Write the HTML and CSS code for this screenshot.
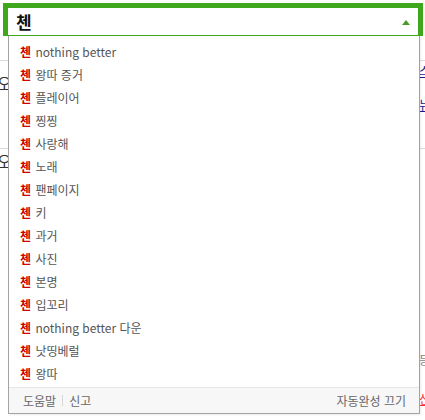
FILE: index.html
```html
<!DOCTYPE html>
<html lang="ko">
<head>
<meta charset="utf-8">
<link rel="stylesheet" href="styles.css">
</head>
<body>
<div class="page">
  <div class="search">
    <span class="query">첸</span>
    <span class="arrow"></span>
  </div>
  <div class="content">
    <div class="row row-a"></div>
    <div class="row row-b">
      <span class="left-frag">오</span>
      <div class="right-frag">
        <a class="link">스포츠</a>
        <a class="link">뉴스</a>
      </div>
    </div>
    <div class="row row-c">
      <span class="left-frag">오</span>
      <div class="right-frag bottom">
        <span class="gray-frag">등록</span>
        <a class="red-frag">신고</a>
      </div>
    </div>
  </div>

  <div class="dropdown">
    <ul class="list">
      <li class="item"><b class="hl">첸</b> nothing better</li>
      <li class="item"><b class="hl">첸</b> 왕따 증거</li>
      <li class="item"><b class="hl">첸</b> 플레이어</li>
      <li class="item"><b class="hl">첸</b> 찡찡</li>
      <li class="item"><b class="hl">첸</b> 사랑해</li>
      <li class="item"><b class="hl">첸</b> 노래</li>
      <li class="item"><b class="hl">첸</b> 팬페이지</li>
      <li class="item"><b class="hl">첸</b> 키</li>
      <li class="item"><b class="hl">첸</b> 과거</li>
      <li class="item"><b class="hl">첸</b> 사진</li>
      <li class="item"><b class="hl">첸</b> 본명</li>
      <li class="item"><b class="hl">첸</b> 입꼬리</li>
      <li class="item"><b class="hl">첸</b> nothing better 다운</li>
      <li class="item"><b class="hl">첸</b> 낫띵베럴</li>
      <li class="item"><b class="hl">첸</b> 왕따</li>
    </ul>
    <div class="footer">
      <div class="footer-left">
        <span class="f-link">도움말</span>
        <span class="sep"></span>
        <span class="f-link">신고</span>
      </div>
      <span class="f-link">자동완성 끄기</span>
    </div>
  </div>
</div>
</body>
</html>
```
FILE: styles.css
```css
html, body {
  margin: 0;
  padding: 0;
  background: #ffffff;
}
body {
  font-family: "Noto Sans CJK KR", "Noto Sans", sans-serif;
  width: 425px;
  height: 420px;
  overflow: hidden;
}
.page {
  position: relative;
  width: 425px;
  height: 420px;
  overflow: hidden;
}
.search {
  margin: 3px 2px 0 3px;
  height: 27px;
  border: 5px solid #3ea71c;
  border-bottom: 1px solid #3ea71c;
  background: #fff;
  display: flex;
  align-items: center;
  justify-content: space-between;
  padding: 0 8px 0 8px;
}
.query {
  font-size: 17px;
  font-weight: bold;
  color: #111;
  line-height: 27px;
}
.arrow {
  width: 0;
  height: 0;
  border-left: 4px solid transparent;
  border-right: 4px solid transparent;
  border-bottom: 5px solid #4c9a2a;
  margin-top: 1px;
}
.content {
  display: flex;
  flex-direction: column;
  font-size: 13px;
}
.row {
  display: flex;
  border-bottom: 1px solid #dcdcdc;
}
.row-a {
  height: 24px;
}
.row-b {
  height: 88px;
  padding-top: 2px;
  box-sizing: border-box;
}
.row-c {
  height: 268px;
  padding-top: 2px;
  box-sizing: border-box;
  border-bottom: none;
}
.left-frag {
  margin-left: -3px;
  margin-top: 10px;
  color: #333;
  font-size: 16px;
  line-height: 20px;
  align-self: flex-start;
}
.row-c .left-frag {
  margin-top: 0;
}
.right-frag {
  margin-left: auto;
  width: 6px;
  display: flex;
  flex-direction: column;
  gap: 18px;
  overflow: hidden;
  white-space: nowrap;
}
.right-frag.bottom {
  gap: 22px;
  padding-top: 200px;
}
.link {
  color: #1a1a8c;
  text-decoration: underline;
  font-size: 12px;
  line-height: 16px;
}
.gray-frag {
  color: #888;
  font-size: 12px;
}
.red-frag {
  color: #e33;
  text-decoration: underline;
  font-size: 12px;
}
.dropdown {
  position: absolute;
  left: 8px;
  top: 36px;
  width: 410px;
  border: 1px solid #a3a3a3;
  border-top: none;
  background: #fff;
  box-shadow: 1px 1px 2px rgba(0, 0, 0, 0.08);
}
.list {
  list-style: none;
  margin: 0;
  padding: 4px 0 0 0;
}
.item {
  height: 23px;
  line-height: 23px;
  padding-left: 11px;
  font-size: 12px;
  color: #555;
  white-space: nowrap;
}
.hl {
  color: #cc0000;
  font-weight: bold;
  margin-right: 1px;
}
.footer {
  margin-top: 2px;
  height: 25px;
  border-top: 1px solid #e6e6e6;
  background: #f7f7f7;
  display: flex;
  align-items: center;
  justify-content: space-between;
  padding: 0 13px 0 14px;
  font-size: 12px;
  color: #666;
}
.footer-left {
  display: flex;
  align-items: center;
  gap: 6px;
}
.sep {
  width: 1px;
  height: 11px;
  background: #d8d8d8;
}
```
